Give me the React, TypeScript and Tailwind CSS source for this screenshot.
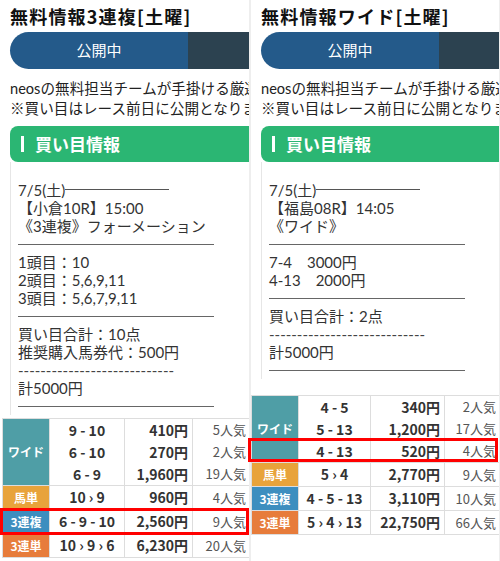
import React from "react";

type Line =
  | { t: "text"; v: string }
  | { t: "date"; v: string }
  | { t: "hr" }
  | { t: "dash" };

type Sub = { combo: string; pay: string; pop: string };
type Group = { label: string; color: string; subs: Sub[] };

function Content({ lines }: { lines: Line[] }) {
  return (
    <div className="ml-[10px] border-l border-[#e6e6e6] pl-[7px] pt-[19px] text-[15px] leading-[18px] text-[#333] font-['Lato','Noto_Sans_CJK_JP',sans-serif] whitespace-nowrap">
      {lines.map((l, i) => {
        if (l.t === "text") return <div key={i} className="h-[18px]">{l.v}</div>;
        if (l.t === "date")
          return (
            <div key={i} className="h-[18px] flex items-center">
              <span>{l.v}</span>
              <span className="inline-block w-[104px] h-px bg-[#555] mt-[-1px]"></span>
            </div>
          );
        if (l.t === "hr")
          return (
            <div key={i} className="h-[18px] flex items-center">
              <div className="w-[196px] h-px bg-[#666]"></div>
            </div>
          );
        return (
          <div key={i} className="h-[18px] text-[#444]">----------------------------</div>
        );
      })}
    </div>
  );
}

function Table({ groups, widths, className }: { groups: Group[]; widths: [string, string, string, string]; className: string }) {
  return (
    <div className={"border-t border-l border-[#dddddd] font-['Noto_Sans_CJK_JP',sans-serif] " + className}>
      {groups.map((g, gi) => (
        <div key={gi} className="flex border-b border-[#dddddd]">
          <div className={widths[0] + " shrink-0 flex items-center justify-center text-white text-[12px] font-bold border-r border-[#dddddd] " + g.color}>
            {g.label}
          </div>
          <div className={widths[1] + " shrink-0 flex flex-col border-r border-[#dddddd]"}>
            {g.subs.map((s, si) => (
              <div key={si} className={(g.subs.length > 1 ? "h-[22px]" : "h-[23px]") + " flex items-center justify-center text-[14px] font-bold text-[#333]"}>
                {s.combo}
              </div>
            ))}
          </div>
          <div className={widths[2] + " shrink-0 flex flex-col border-r border-[#dddddd]"}>
            {g.subs.map((s, si) => (
              <div key={si} className={(g.subs.length > 1 ? "h-[22px]" : "h-[23px]") + " flex items-center justify-end pr-[4px] text-[14px] font-bold text-[#333]"}>
                {s.pay}
              </div>
            ))}
          </div>
          <div className={widths[3] + " shrink-0 flex flex-col border-r border-[#dddddd]"}>
            {g.subs.map((s, si) => (
              <div key={si} className={(g.subs.length > 1 ? "h-[22px]" : "h-[23px]") + " flex items-center justify-end pr-[3px] text-[13px] text-[#555]"}>
                {s.pop}
              </div>
            ))}
          </div>
        </div>
      ))}
    </div>
  );
}

function Header({ title }: { title: string }) {
  return (
    <>
      <div className="pl-[10px] pt-[3px] h-[29px] text-[18px] leading-[26px] font-bold tracking-[1.2px] text-[#111] font-['Noto_Sans_CJK_JP',sans-serif] whitespace-nowrap">
        {title}
      </div>
      <div className="ml-[10px] mt-[3px] flex w-[360px] h-[37px] font-['Noto_Sans_CJK_JP',sans-serif]">
        <div className="w-[178px] shrink-0 bg-[#245a8a] rounded-l-full flex items-center justify-center text-white text-[15px]">
          公開中
        </div>
        <div className="w-[178px] shrink-0 bg-[#2c4250]"></div>
      </div>
      <div className="pl-[10px] mt-[10px] text-[14.6px] leading-[20px] text-[#222] font-['Lato','Noto_Sans_CJK_JP',sans-serif] whitespace-nowrap">
        <div>neosの無料担当チームが手掛ける厳選買い目を無料公開！</div>
        <div>※買い目はレース前日に公開となります。</div>
      </div>
      <div className="ml-[10px] mt-[7px] w-[360px] h-[36px] bg-[#2bb673] rounded-l-[8px] flex items-center">
        <div className="ml-[11px] w-[3px] h-[16px] bg-white"></div>
        <div className="ml-[11px] text-white text-[17px] font-bold font-['Noto_Sans_CJK_JP',sans-serif]">買い目情報</div>
      </div>
    </>
  );
}

const TEAL = "bg-[#4f9ea6]";
const YEL = "bg-[#e8a33b]";
const BLUE = "bg-[#3d8ebf]";
const ORG = "bg-[#e77c3b]";

export default function App() {
  const leftLines: Line[] = [
    { t: "date", v: "7/5(土)" },
    { t: "text", v: "【小倉10R】15:00" },
    { t: "text", v: "《3連複》フォーメーション" },
    { t: "hr" },
    { t: "text", v: "1頭目：10" },
    { t: "text", v: "2頭目：5,6,9,11" },
    { t: "text", v: "3頭目：5,6,7,9,11" },
    { t: "hr" },
    { t: "text", v: "買い目合計：10点" },
    { t: "text", v: "推奨購入馬券代：500円" },
    { t: "dash" },
    { t: "text", v: "計5000円" },
    { t: "hr" },
  ];
  const rightLines: Line[] = [
    { t: "date", v: "7/5(土)" },
    { t: "text", v: "【福島08R】14:05" },
    { t: "text", v: "《ワイド》" },
    { t: "hr" },
    { t: "text", v: "7-4　3000円" },
    { t: "text", v: "4-13　2000円" },
    { t: "hr" },
    { t: "text", v: "買い目合計：2点" },
    { t: "dash" },
    { t: "text", v: "計5000円" },
    { t: "hr" },
  ];
  const leftGroups: Group[] = [
    {
      label: "ワイド",
      color: TEAL,
      subs: [
        { combo: "9 - 10", pay: "410円", pop: "5人気" },
        { combo: "6 - 10", pay: "270円", pop: "2人気" },
        { combo: "6 - 9", pay: "1,960円", pop: "19人気" },
      ],
    },
    { label: "馬単", color: YEL, subs: [{ combo: "10 › 9", pay: "960円", pop: "4人気" }] },
    { label: "3連複", color: BLUE, subs: [{ combo: "6 - 9 - 10", pay: "2,560円", pop: "9人気" }] },
    { label: "3連単", color: ORG, subs: [{ combo: "10 › 9 › 6", pay: "6,230円", pop: "20人気" }] },
  ];
  const rightGroups: Group[] = [
    {
      label: "ワイド",
      color: TEAL,
      subs: [
        { combo: "4 - 5", pay: "340円", pop: "2人気" },
        { combo: "5 - 13", pay: "1,200円", pop: "17人気" },
        { combo: "4 - 13", pay: "520円", pop: "4人気" },
      ],
    },
    { label: "馬単", color: YEL, subs: [{ combo: "5 › 4", pay: "2,770円", pop: "9人気" }] },
    { label: "3連複", color: BLUE, subs: [{ combo: "4 - 5 - 13", pay: "3,110円", pop: "10人気" }] },
    { label: "3連単", color: ORG, subs: [{ combo: "5 › 4 › 13", pay: "22,750円", pop: "66人気" }] },
  ];

  return (
    <div className="relative w-[500px] h-[561px] bg-white flex overflow-hidden">
      <div className="w-[251px] shrink-0 h-full border-r-2 border-[#eeeeee] overflow-hidden">
        <Header title="無料情報3連複[土曜]" />
        <Content lines={leftLines} />
        <Table groups={leftGroups} widths={["w-[47px]", "w-[75px]", "w-[68px]", "w-[57px]"]} className="ml-[2px] mt-[3px] w-[247px]" />
      </div>
      <div className="w-[249px] shrink-0 h-full border-r border-[#eeeeee] overflow-hidden">
        <Header title="無料情報ワイド[土曜]" />
        <Content lines={rightLines} />
        <Table groups={rightGroups} widths={["w-[47px]", "w-[72px]", "w-[74px]", "w-[55px]"]} className="mt-[16px] w-[248px]" />
      </div>
      <div className="absolute left-0 top-[508px] w-[249px] h-[27px] border-[3px] border-[#ff0000]"></div>
      <div className="absolute left-[248px] top-[438px] w-[250px] h-[24px] border-[3px] border-[#ff0000]"></div>
    </div>
  );
}
